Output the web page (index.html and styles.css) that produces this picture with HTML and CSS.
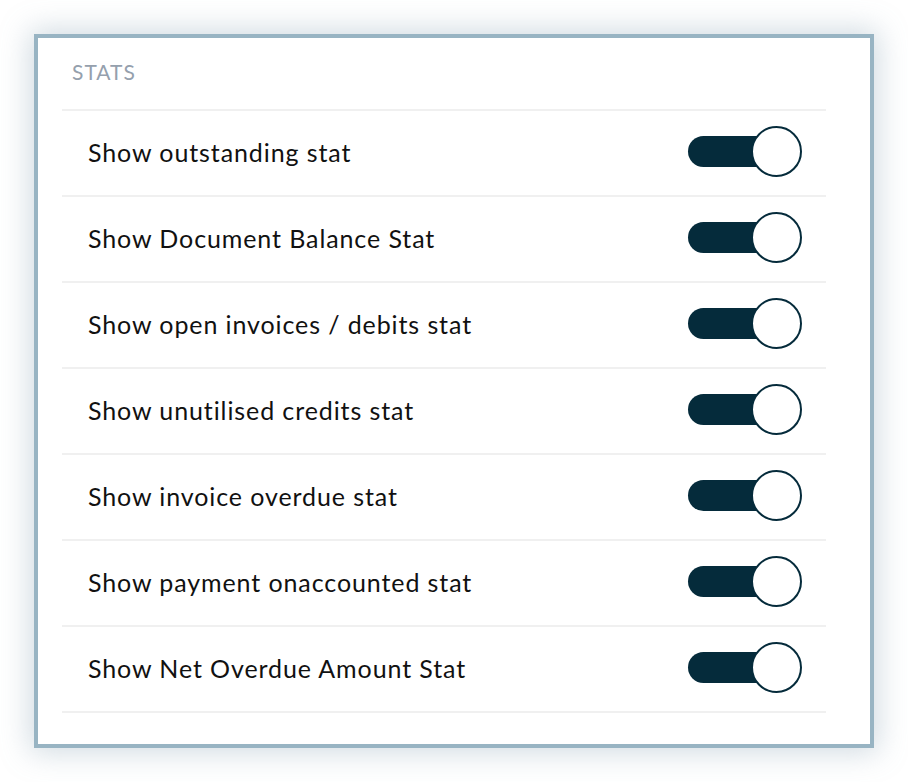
FILE: index.html
```html
<!DOCTYPE html>
<html>
<head>
<meta charset="utf-8">
<link rel="stylesheet" href="styles.css">
</head>
<body>
<div class="panel">
  <div class="title">STATS</div>
  <ul class="list">
    <li class="row"><span class="label">Show outstanding stat</span><span class="toggle"><span class="track"></span><span class="knob"></span></span></li>
    <li class="row"><span class="label">Show Document Balance Stat</span><span class="toggle"><span class="track"></span><span class="knob"></span></span></li>
    <li class="row"><span class="label">Show open invoices / debits stat</span><span class="toggle"><span class="track"></span><span class="knob"></span></span></li>
    <li class="row"><span class="label">Show unutilised credits stat</span><span class="toggle"><span class="track"></span><span class="knob"></span></span></li>
    <li class="row"><span class="label">Show invoice overdue stat</span><span class="toggle"><span class="track"></span><span class="knob"></span></span></li>
    <li class="row"><span class="label">Show payment onaccounted stat</span><span class="toggle"><span class="track"></span><span class="knob"></span></span></li>
    <li class="row"><span class="label">Show Net Overdue Amount Stat</span><span class="toggle"><span class="track"></span><span class="knob"></span></span></li>
  </ul>
</div>
</body>
</html>
```
FILE: styles.css
```css
html, body {
  margin: 0;
  padding: 0;
  background: #ffffff;
}
body {
  padding: 34px;
  font-family: Lato, "Open Sans", sans-serif;
}
.panel {
  width: 764px;
  height: 706px;
  border: 4px solid #98b4c3;
  background: #ffffff;
  box-shadow: 0 0 28px 4px rgba(120, 150, 170, 0.35);
  padding: 0 44px 0 24px;
  box-sizing: content-box;
}
.title {
  height: 73px;
  box-sizing: border-box;
  padding: 21px 0 0 10px;
  font-size: 21px;
  color: #95a0ad;
  letter-spacing: 1px;
  border-bottom: 2px solid #f0f0f0;
}
.list {
  list-style: none;
  margin: 0;
  padding: 0;
}
.row {
  height: 86px;
  box-sizing: border-box;
  border-bottom: 2px solid #f0f0f0;
  display: flex;
  align-items: center;
  justify-content: space-between;
  padding: 0 24px 3px 26px;
}
.label {
  font-size: 25px;
  letter-spacing: 0.9px;
  color: #111111;
}
.toggle {
  position: relative;
  width: 114px;
  height: 51px;
  display: block;
}
.track {
  position: absolute;
  left: 0;
  top: 10px;
  width: 96px;
  height: 31px;
  border-radius: 16px;
  background: #052b3b;
}
.knob {
  position: absolute;
  right: 0;
  top: 0;
  width: 51px;
  height: 51px;
  box-sizing: border-box;
  border-radius: 50%;
  border: 2px solid #052b3b;
  background: #ffffff;
}
```
